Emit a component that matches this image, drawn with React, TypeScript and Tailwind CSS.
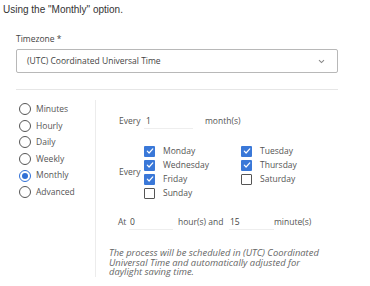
import type { JSX } from "react";

const FONT = "font-['Open_Sans',sans-serif]";

const frequencies = ["Minutes", "Hourly", "Daily", "Weekly", "Monthly", "Advanced"];

const days: { label: string; checked: boolean }[][] = [
  [
    { label: "Monday", checked: true },
    { label: "Tuesday", checked: true },
  ],
  [
    { label: "Wednesday", checked: true },
    { label: "Thursday", checked: true },
  ],
  [
    { label: "Friday", checked: true },
    { label: "Saturday", checked: false },
  ],
  [{ label: "Sunday", checked: false }],
];

function Radio({ label, selected }: { label: string; selected: boolean }): JSX.Element {
  return (
    <div className="flex h-[16.6px] items-center">
      <span
        className={`flex h-[12px] w-[12px] items-center justify-center rounded-full border-[1.5px] ${
          selected ? "border-[#2f6fd6]" : "border-[#555]"
        }`}
      >
        {selected ? <span className="h-[6px] w-[6px] rounded-full bg-[#2f6fd6]" /> : null}
      </span>
      <span className="ml-[5px] text-[8.5px] text-[#555]">{label}</span>
    </div>
  );
}

function Checkbox({ label, checked }: { label: string; checked: boolean }): JSX.Element {
  return (
    <div className="flex h-[14px] items-center">
      {checked ? (
        <span className="flex h-[11px] w-[11px] items-center justify-center rounded-[1px] bg-[#3a78d8]">
          <svg width="8" height="8" viewBox="0 0 8 8" fill="none">
            <path d="M1.3 4.2 L3.1 6 L6.8 1.9" stroke="#fff" strokeWidth="1.2" strokeLinecap="round" strokeLinejoin="round" />
          </svg>
        </span>
      ) : (
        <span className="h-[11px] w-[11px] rounded-[1px] border-[1.5px] border-[#555]" />
      )}
      <span className="ml-[8px] text-[8.5px] text-[#555]">{label}</span>
    </div>
  );
}

export default function App(): JSX.Element {
  return (
    <div className="h-[286px] w-[370px] overflow-hidden bg-white">
      <p className="pl-[3px] pt-[4px] font-['Liberation_Sans',Arial,sans-serif] text-[10px] leading-[12px] text-[#333]">
        Using the "Monthly" option.
      </p>

      <div className={`ml-[16px] w-[322px] ${FONT}`}>
        <div className="mt-[17px] text-[8.5px] font-medium leading-[12px] text-[#444]">
          Timezone *
        </div>
        <div className="mt-[4px] flex h-[24px] items-center justify-between rounded-[2px] border border-[#b8b8b8] pl-[10px] pr-[12px]">
          <span className="text-[8.5px] text-[#444]">(UTC) Coordinated Universal Time</span>
          <svg width="7" height="5" viewBox="0 0 7 5" fill="none">
            <path d="M1 1.2 L3.5 3.6 L6 1.2" stroke="#888" strokeWidth="1.1" />
          </svg>
        </div>
        <div className="mt-[16px] h-px bg-[#e6e6e6]" />

        <div className="flex">
          <div className="w-[79px] pl-[3px] pt-[11px]">
            {frequencies.map((f) => (
              <Radio key={f} label={f} selected={f === "Monthly"} />
            ))}
          </div>

          <div className="mt-[10px] border-l border-[#ececec] text-[8.5px] text-[#555]">
            <div className="ml-[23px] mt-[13px] flex h-[16px] items-center">
              <span className="w-[25px]">Every</span>
              <span className="w-[49px] self-stretch border-b border-[#eeeeee] pl-[2px] leading-[16px] text-[#444]">
                1
              </span>
              <span className="ml-[12px]">month(s)</span>
            </div>

            <div className="ml-[23px] mt-[15px] flex items-center">
              <span className="w-[25px]">Every</span>
              <div>
                {days.map((row, i) => (
                  <div key={i} className="grid grid-cols-[97px_97px]">
                    {row.map((d) => (
                      <Checkbox key={d.label} label={d.label} checked={d.checked} />
                    ))}
                  </div>
                ))}
              </div>
            </div>

            <div className="ml-[22px] mt-[14px] flex h-[16px] items-center">
              <span className="w-[11px]">At</span>
              <span className="w-[44px] self-stretch border-b border-[#eeeeee] pl-[1px] leading-[16px] text-[#444]">
                0
              </span>
              <span className="ml-[5px] w-[51px]">hour(s) and</span>
              <span className="w-[45px] self-stretch border-b border-[#eeeeee] pl-[1px] leading-[16px] text-[#444]">
                15
              </span>
              <span>minute(s)</span>
            </div>

            <p className="ml-[13px] mt-[18px] w-[225px] text-[9.4px] italic leading-[9.7px] text-[#666]">
              The process will be scheduled in (UTC) Coordinated Universal Time and automatically adjusted for daylight saving time.
            </p>
          </div>
        </div>
      </div>
    </div>
  );
}
